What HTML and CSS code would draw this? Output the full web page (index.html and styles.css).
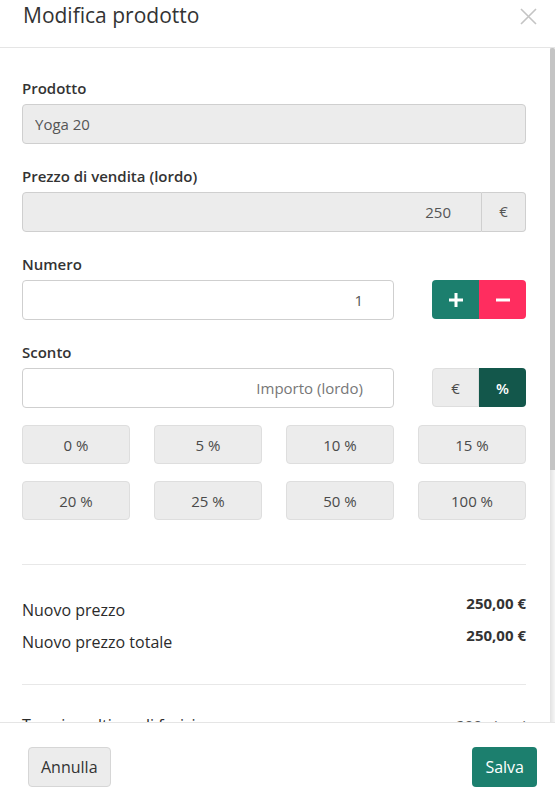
FILE: index.html
```html
<!DOCTYPE html>
<html lang="it">
<head>
    <meta charset="UTF-8">
    <meta name="viewport" content="width=device-width, initial-scale=1.0">
    <title>Modifica prodotto</title>
    <link rel="stylesheet" href="styles.css">
</head>
<body>
    <div class="modal">
        <div class="modal-header">
            <h4 class="modal-title">Modifica prodotto</h4>
            <button type="button" class="close" aria-label="Chiudi">
                <svg width="17" height="17" viewBox="0 0 17 17">
                    <path d="M1 1 L16 16 M16 1 L1 16" stroke="#c4c4c4" stroke-width="1.6" fill="none"/>
                </svg>
            </button>
        </div>

        <div class="modal-main">
            <div class="modal-body">
                <div class="form-group">
                    <label>Prodotto</label>
                    <input type="text" class="form-control" value="Yoga 20" readonly>
                </div>

                <div class="form-group">
                    <label>Prezzo di vendita (lordo)</label>
                    <div class="input-group">
                        <input type="text" class="form-control text-right" value="250" readonly>
                        <span class="addon">€</span>
                    </div>
                </div>

                <div class="form-group">
                    <label>Numero</label>
                    <div class="row">
                        <input type="text" class="form-control white text-right" value="1">
                        <div class="btn-pair">
                            <button type="button" class="btn btn-green">
                                <svg width="14" height="14" viewBox="0 0 14 14"><path d="M5.5 0h3v5.5H14v3H8.5V14h-3V8.5H0v-3h5.5z" fill="#fff"/></svg>
                            </button>
                            <button type="button" class="btn btn-red">
                                <svg width="14" height="14" viewBox="0 0 14 14"><rect x="0" y="5.5" width="14" height="3" fill="#fff"/></svg>
                            </button>
                        </div>
                    </div>
                </div>

                <div class="form-group discount">
                    <label>Sconto</label>
                    <div class="row">
                        <input type="text" class="form-control white text-right" placeholder="Importo (lordo)">
                        <div class="btn-pair">
                            <button type="button" class="btn btn-gray">€</button>
                            <button type="button" class="btn btn-dark">%</button>
                        </div>
                    </div>
                    <div class="pct-grid">
                        <button type="button" class="btn btn-gray">0 %</button>
                        <button type="button" class="btn btn-gray">5 %</button>
                        <button type="button" class="btn btn-gray">10 %</button>
                        <button type="button" class="btn btn-gray">15 %</button>
                        <button type="button" class="btn btn-gray">20 %</button>
                        <button type="button" class="btn btn-gray">25 %</button>
                        <button type="button" class="btn btn-gray">50 %</button>
                        <button type="button" class="btn btn-gray">100 %</button>
                    </div>
                </div>

                <hr>

                <div class="summary">
                    <div class="sum-row">
                        <span class="sum-label">Nuovo prezzo</span>
                        <span class="sum-value">250,00 €</span>
                    </div>
                    <div class="sum-row">
                        <span class="sum-label">Nuovo prezzo totale</span>
                        <span class="sum-value">250,00 €</span>
                    </div>
                </div>

                <hr class="hr-tight">

                <div class="summary extra">
                    <div class="sum-row">
                        <span class="sum-label">Termine ultimo di fruizione</span>
                        <span class="sum-value light">200 giorni</span>
                    </div>
                    <div class="sum-row">
                        <span class="sum-label">Ingressi inclusi</span>
                        <span class="sum-value light">20</span>
                    </div>
                </div>

                <div class="form-group">
                    <label>Data di inizio</label>
                    <input type="text" class="form-control white" value="01.09.2023">
                </div>

                <div class="form-group">
                    <label>Nota</label>
                    <textarea class="form-control white note" rows="4"></textarea>
                </div>
            </div>
            <div class="scroll-track"><div class="scroll-thumb"></div></div>
        </div>

        <div class="modal-footer">
            <button type="button" class="btn btn-gray btn-foot">Annulla</button>
            <button type="button" class="btn btn-green btn-foot">Salva</button>
        </div>
    </div>
</body>
</html>
```

FILE: styles.css
```css
* {
    box-sizing: border-box;
}

body {
    margin: 0;
    font-family: "Open Sans", Arial, sans-serif;
    font-size: 15px;
    color: #333;
    background-color: #fff;
}

.modal {
    display: flex;
    flex-direction: column;
    height: 807px;
}

.modal-header {
    height: 48px;
    border-bottom: 1px solid #e5e5e5;
    display: flex;
    justify-content: space-between;
    align-items: flex-start;
    padding: 0 18px 0 23px;
    flex-shrink: 0;
}

.modal-title {
    margin: 0;
    padding-top: 1px;
    font-size: 21px;
    font-weight: normal;
    line-height: 29px;
    color: #333;
}

.close {
    background: none;
    border: none;
    padding: 0;
    margin-top: 8px;
    cursor: pointer;
}

.modal-main {
    flex: 1;
    display: flex;
    min-height: 0;
}

.modal-body {
    flex: 1;
    overflow-y: auto;
    scrollbar-width: none;
    padding: 28px 24px 30px 22px;
}

.scroll-track {
    width: 5px;
    flex-shrink: 0;
    background: linear-gradient(to right, #e2e2e2, #f6f6f6);
}

.scroll-thumb {
    height: 422px;
    background-color: #c4c4c4;
    border-radius: 2px 2px 0 0;
}

.form-group {
    margin-bottom: 20px;
}

.form-group.discount {
    margin-bottom: 44px;
}

label {
    display: block;
    font-weight: 600;
    line-height: 21px;
    padding-top: 2px;
    margin-bottom: 5px;
}

.form-control {
    display: block;
    width: 100%;
    height: 40px;
    padding: 6px 12px;
    font-family: inherit;
    font-size: 15px;
    color: #555;
    background-color: #ececec;
    border: 1px solid #cfcfcf;
    border-radius: 4px;
    outline: none;
}

.form-control.white {
    background-color: #fff;
}

.form-control::placeholder {
    color: #777;
}

.text-right {
    text-align: right;
    padding-right: 30px;
}

.note {
    height: auto;
    resize: none;
}

.input-group {
    display: flex;
}

.input-group .form-control {
    border-radius: 4px 0 0 4px;
}

.addon {
    width: 44px;
    flex-shrink: 0;
    display: flex;
    align-items: center;
    justify-content: center;
    background-color: #ececec;
    border: 1px solid #cfcfcf;
    border-left: none;
    border-radius: 0 4px 4px 0;
    color: #555;
    padding-bottom: 2px;
}

.row {
    display: flex;
    gap: 38px;
}

.row .form-control {
    flex: 1;
}

.btn-pair {
    display: flex;
    width: 94px;
    flex-shrink: 0;
}

.btn {
    font-family: inherit;
    font-size: 15px;
    border: 1px solid transparent;
    border-radius: 4px;
    cursor: pointer;
    padding: 0;
    height: 39px;
    display: flex;
    align-items: center;
    justify-content: center;
}

.btn-pair .btn {
    flex: 1;
}

.btn-pair .btn:first-child {
    border-radius: 4px 0 0 4px;
}

.btn-pair .btn:last-child {
    border-radius: 0 4px 4px 0;
}

.btn-green {
    background-color: #1c7f6e;
    color: #fff;
}

.btn-red {
    background-color: #ff2d5f;
}

.btn-gray {
    background-color: #ececec;
    border-color: #dedede;
    color: #4a4a4a;
}

.btn-dark {
    background-color: #13574b;
    color: #fff;
    font-weight: 600;
}

.pct-grid {
    display: grid;
    grid-template-columns: repeat(4, 1fr);
    gap: 17px 24px;
    margin-top: 17px;
}

hr {
    border: none;
    border-top: 1px solid #e8e8e8;
    margin: 29px 0 26px;
}

hr.hr-tight {
    margin-bottom: 28px;
}

.sum-row {
    display: flex;
    justify-content: space-between;
    align-items: flex-start;
    height: 32px;
}

.sum-label {
    font-size: 16px;
    color: #2b2b2b;
    padding-top: 8px;
}

.sum-value {
    font-weight: 700;
    font-size: 15px;
    padding-top: 2px;
}

.extra .sum-label {
    padding-top: 1px;
}

.sum-value.light {
    font-weight: normal;
    color: #555;
}

.summary + .form-group {
    margin-top: 30px;
}

.modal-footer {
    flex-shrink: 0;
    height: 85px;
    border-top: 1px solid #e5e5e5;
    display: flex;
    justify-content: space-between;
    align-items: flex-start;
    padding: 24px 18px 0 28px;
}

.btn-foot {
    height: 40px;
    padding: 0 12px;
    font-size: 16px;
}

.btn-foot.btn-gray {
    border-color: #d6d6d6;
    color: #333;
}
```
